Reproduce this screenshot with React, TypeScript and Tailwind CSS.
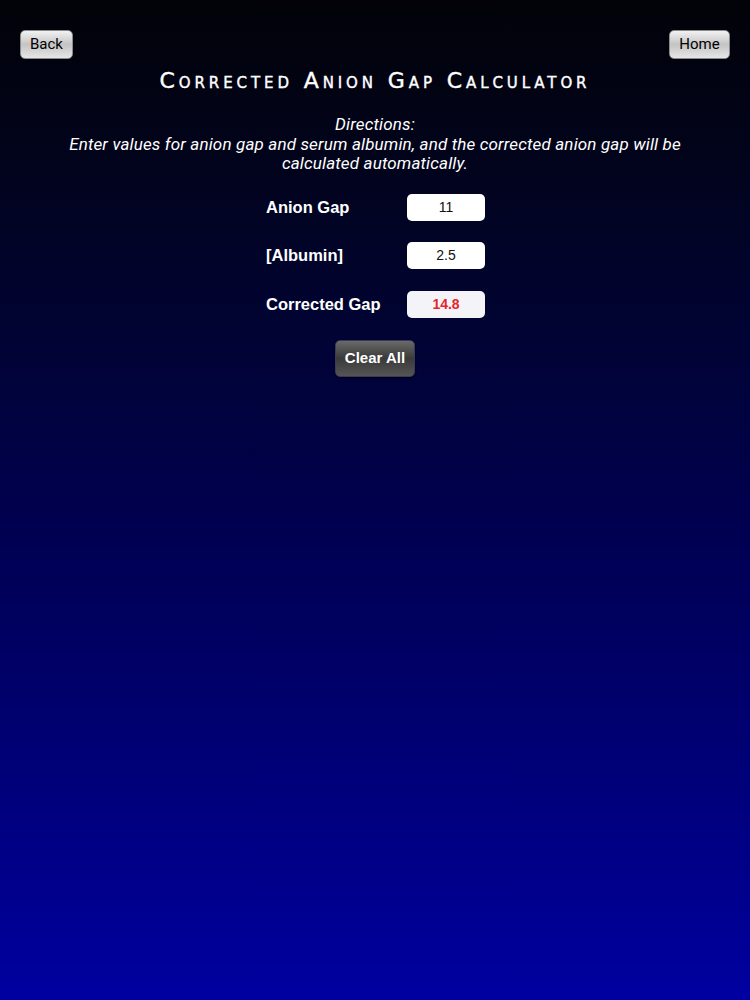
import React from "react";

export default function App() {
  return (
    <div className="w-[750px] h-[1000px] bg-gradient-to-b from-[#020208] via-[#00004c] via-50% to-[#0000a0] text-white" style={{ fontFamily: '"Liberation Sans", Arial, sans-serif' }}>
      <div className="flex justify-between px-[20px] pt-[30px]">
        <button className="h-[29px] w-[53px] rounded-[5px] border border-[#8a8a8a] bg-gradient-to-b from-[#f2f2f2] via-[#c4c4c4] to-[#e6e6e6] text-[15px] text-black" style={{ fontFamily: '"Roboto", "Liberation Sans", sans-serif' }}>Back</button>
        <button className="h-[29px] w-[61px] rounded-[5px] border border-[#8a8a8a] bg-gradient-to-b from-[#f2f2f2] via-[#c4c4c4] to-[#e6e6e6] text-[15px] text-black" style={{ fontFamily: '"Roboto", "Liberation Sans", sans-serif' }}>Home</button>
      </div>
      <h1 className="mt-[8px] text-center text-[22px] font-normal leading-[28px] tracking-[3.9px] [font-variant:small-caps] [-webkit-text-stroke:0.4px_white]" style={{ fontFamily: '"DejaVu Sans", sans-serif' }}>Corrected Anion Gap Calculator</h1>
      <div className="mt-[20px] text-center text-[17px] italic leading-[19.5px] tracking-[0.15px]" style={{ fontFamily: '"Roboto", "Liberation Sans", sans-serif' }}>
        <div>Directions:</div>
        <div className="px-[50px]">Enter values for anion gap and serum albumin, and the corrected anion gap will be calculated automatically.</div>
      </div>
      <div className="mt-[20px] flex flex-col items-center gap-[21.5px]">
        {[
          { label: "Anion Gap", value: "11", red: false },
          { label: "[Albumin]", value: "2.5", red: false },
          { label: "Corrected Gap", value: "14.8", red: true },
        ].map((r) => (
          <div key={r.label} className="flex items-center w-[219px] ml-[1px]">
            <div className="w-[141px] text-[16.5px] font-bold">{r.label}</div>
            <div className={`flex h-[27px] w-[78px] items-center justify-center rounded-[5px] text-[14px] ${r.red ? "bg-[#f4f4f8] font-bold text-[#e3262b]" : "bg-white text-[#111]"}`}>{r.value}</div>
          </div>
        ))}
      </div>
      <div className="mt-[22px] flex justify-center">
        <button className="h-[37px] w-[80px] rounded-[5px] border border-[#3a3a55] bg-gradient-to-b from-[#6a6a6a] via-[#3a3a3a] to-[#555] text-[15px] font-bold text-white shadow-[0_1px_2px_rgba(0,0,0,0.6)]">Clear All</button>
      </div>
    </div>
  );
}
